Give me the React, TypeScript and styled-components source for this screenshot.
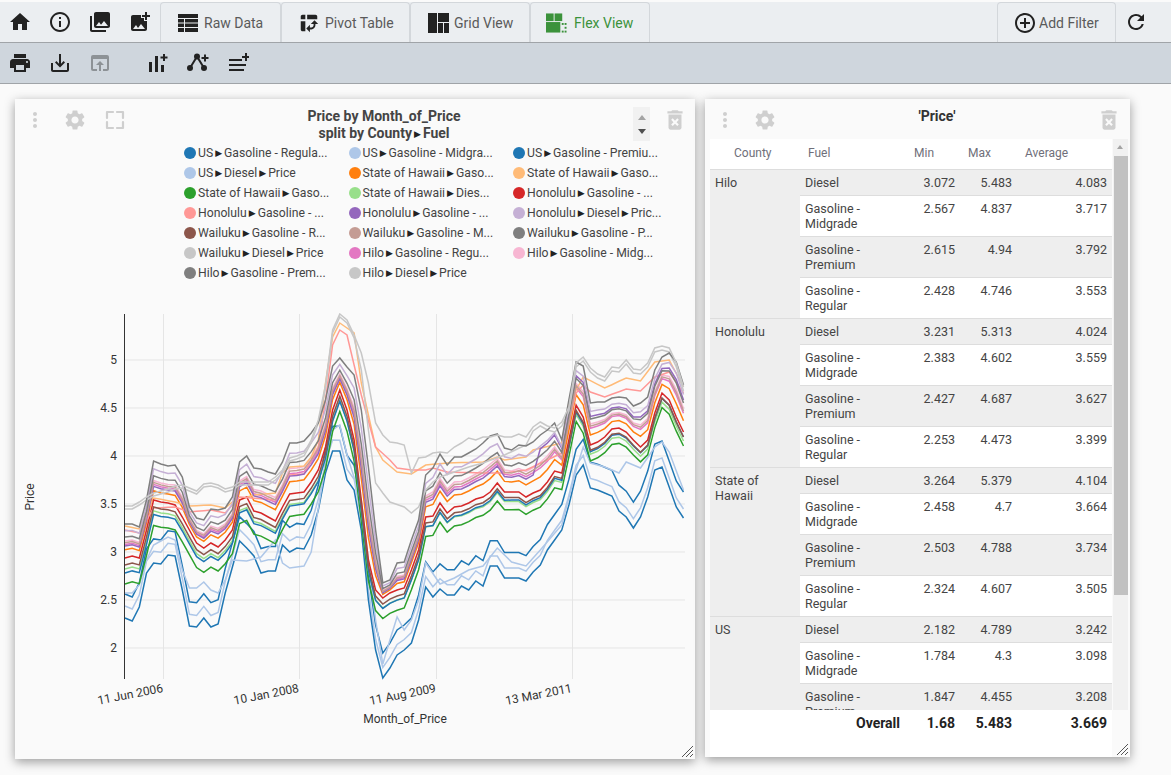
import * as React from 'react'
import styled, { createGlobalStyle } from 'styled-components'
import {
  MdHome,
  MdInfoOutline,
  MdPhotoLibrary,
  MdAddPhotoAlternate,
  MdPivotTableChart,
  MdAddCircleOutline,
  MdRefresh,
  MdPrint,
  MdSaveAlt,
  MdOpenInBrowser,
  MdMoreVert,
  MdSettings,
  MdDeleteForever,
} from 'react-icons/md'

const GlobalStyle = createGlobalStyle`
  html, body {
    margin: 0;
    height: 100%;
    overflow: hidden;
    background: #fafafa;
    font-family: Roboto, "Liberation Sans", Arial, sans-serif;
    color: #333;
  }
`

const TopBar = styled.div`
  display: flex;
  align-items: stretch;
  height: 40px;
  margin-top: 2px;
  padding-right: 15px;
  background: #ebeef1;
  border-bottom: 1px solid #a0a4a8;
`

const SubBar = styled.div`
  display: flex;
  align-items: stretch;
  height: 40px;
  background: #cfd6dd;
  border-bottom: 1px solid #a0a4a8;
`

const ToolIcon = styled.div<{ $muted?: boolean; $gapLeft?: number }>`
  display: flex;
  align-items: center;
  justify-content: center;
  width: 40px;
  margin-left: ${(p) => p.$gapLeft || 0}px;
  color: ${(p) => (p.$muted ? '#8d9296' : '#222')};
  font-size: 24px;
`

const ViewButton = styled.div<{ $active?: boolean; $width: number; $pad?: number; $gap?: number }>`
  display: flex;
  align-items: center;
  gap: ${(p) => (p.$gap === undefined ? 6 : p.$gap)}px;
  box-sizing: border-box;
  width: ${(p) => p.$width}px;
  padding-left: ${(p) => (p.$pad === undefined ? 17 : p.$pad)}px;
  border: 1px solid #d3d7db;
  border-bottom: none;
  border-radius: 4px 4px 0 0;
  color: ${(p) => (p.$active ? '#3b923b' : '#5a5a5a')};
  font-size: 14px;
`

const Spacer = styled.div`
  flex: 1;
`

const Workspace = styled.div`
  display: flex;
  align-items: flex-start;
  gap: 10px;
  padding: 15px 0 0 15px;
`

const Panel = styled.div<{ $width: number; $height: number }>`
  position: relative;
  width: ${(p) => p.$width}px;
  height: ${(p) => p.$height}px;
  background: #fafafa;
  box-shadow: 0 3px 10px rgba(0, 0, 0, 0.38);
`

const PanelHeader = styled.div<{ $height: number }>`
  display: flex;
  align-items: flex-start;
  height: ${(p) => p.$height}px;
`

const PanelIcon = styled.div<{ $gapRight?: number; $gapLeft?: number; $size?: number }>`
  display: flex;
  align-items: center;
  justify-content: center;
  flex: none;
  width: 40px;
  height: 42px;
  margin-left: ${(p) => p.$gapLeft || 0}px;
  margin-right: ${(p) => p.$gapRight || 0}px;
  color: #cfcfcf;
  font-size: ${(p) => p.$size || 24}px;
`

const ChartTitle = styled.div`
  flex: 1;
  padding-top: 9px;
  text-align: center;
  font-size: 14px;
  font-weight: 700;
  line-height: 16.5px;
  color: #444;
`

const TableTitle = styled.div`
  flex: 1;
  padding-top: 9px;
  text-align: center;
  font-size: 14px;
  font-weight: 700;
  line-height: 16px;
  color: #333;
`

const Arrow = styled.span`
  margin: 0 2px;
  font-family: "DejaVu Sans", sans-serif;
  font-size: 9px;
  font-weight: 400;
  color: #222;
  vertical-align: 1px;
`

const Spinner = styled.div`
  display: flex;
  flex: none;
  flex-direction: column;
  align-items: center;
  justify-content: space-around;
  width: 17px;
  height: 34px;
  margin-top: 8px;
  padding: 3px 0;
  box-sizing: border-box;
  background: #f1f1f1;
`

const SpinUp = styled.div`
  border-left: 4px solid transparent;
  border-right: 4px solid transparent;
  border-bottom: 5px solid #a3a3a3;
`

const SpinDown = styled.div`
  border-left: 4px solid transparent;
  border-right: 4px solid transparent;
  border-top: 5px solid #505050;
`

const Legend = styled.div`
  display: grid;
  grid-template-columns: repeat(3, 164.5px);
  grid-auto-rows: 20px;
  height: 141px;
  padding-left: 169px;
`

const LegendItem = styled.div`
  display: flex;
  align-items: center;
  gap: 2px;
  font-size: 12.2px;
  white-space: nowrap;
  color: #444;
`

const Swatch = styled.span<{ $color: string }>`
  flex: none;
  width: 12px;
  height: 12px;
  border-radius: 50%;
  background: ${(p) => p.$color};
`

const ChartSvg = styled.svg`
  display: block;
`

const TickLabel = styled.text`
  font-size: 12px;
  fill: #333;
`

const AxisLabel = styled.text`
  font-size: 12px;
  fill: #333;
`

const Resize = styled.svg`
  position: absolute;
  right: 2px;
  bottom: 2px;
`

const TableWrap = styled.div`
  display: flex;
  height: 571px;
  padding-left: 5px;
`

const TableClip = styled.div`
  width: 402px;
  height: 571px;
  overflow: hidden;
  background: #fff;
`

const DataTable = styled.table`
  width: 402px;
  table-layout: fixed;
  border-collapse: collapse;
  font-size: 12.5px;
  line-height: 15px;
  color: #444;
`

const HeadRow = styled.tr`
  height: 30px;
  border-bottom: 1px solid #ddd;
`

const HeadCell = styled.th<{ $indent: number }>`
  padding: 0 0 0 ${(p) => p.$indent}px;
  text-align: left;
  font-weight: 400;
  font-size: 12px;
  color: #6f6f7a;
`

const GroupCell = styled.td`
  padding: 5px;
  vertical-align: top;
  background: #eee;
  border-bottom: 1px solid #ddd;
`

const Row = styled.tr<{ $shaded: boolean }>`
  background: ${(p) => (p.$shaded ? '#eee' : '#fff')};
  border-bottom: 1px solid #ddd;
`

const Cell = styled.td<{ $num?: boolean }>`
  padding: 5px;
  vertical-align: top;
  text-align: ${(p) => (p.$num ? 'right' : 'left')};
`

const Track = styled.div`
  position: relative;
  flex: none;
  width: 15px;
  margin-left: 1px;
  background: #f1f1f1;
`

const TrackArrow = styled.div`
  position: absolute;
  top: 6px;
  left: 4px;
  border-left: 3.5px solid transparent;
  border-right: 3.5px solid transparent;
  border-bottom: 4px solid #a3a3a3;
`

const Thumb = styled.div`
  position: absolute;
  top: 17px;
  left: 1px;
  right: 0;
  height: 439px;
  background: #c1c1c1;
`

const TotalRow = styled.div`
  display: grid;
  grid-template-columns: 200px 50px 57px 95px;
  width: 402px;
  height: 47px;
  margin-left: 5px;
  background: #fff;
  font-size: 14px;
  font-weight: 700;
  line-height: 26px;
  color: #222;
`

const TotalCell = styled.div`
  padding-right: 5px;
  text-align: right;
`

const TotalName = styled(TotalCell)`
  padding-right: 10px;
`

const RawIcon = () => (
  <svg width="20" height="18" viewBox="0 0 20 18" fill="#222">
    <rect x="0" y="0" width="20" height="4" />
    <rect x="0" y="5" width="6" height="3.5" />
    <rect x="7" y="5" width="13" height="3.5" />
    <rect x="0" y="9.5" width="6" height="3.5" />
    <rect x="7" y="9.5" width="13" height="3.5" />
    <rect x="0" y="14" width="6" height="4" />
    <rect x="7" y="14" width="13" height="4" />
  </svg>
)

const GridIcon = () => (
  <svg width="21" height="20" viewBox="0 0 21 20" fill="#222">
    <rect x="0" y="0" width="9" height="20" />
    <rect x="10" y="0" width="11" height="9" />
    <rect x="10" y="10" width="5" height="10" />
    <rect x="16" y="10" width="5" height="10" />
  </svg>
)

const FlexIcon = () => (
  <svg width="21" height="20" viewBox="0 0 22 20" fill="#3b923b">
    <rect x="0" y="0" width="8" height="8" />
    <rect x="9" y="0" width="8" height="8" />
    <rect x="0" y="9" width="15" height="11" />
    <rect x="16.5" y="10" width="2" height="2" />
    <rect x="19.5" y="10" width="2" height="2" />
    <rect x="19.5" y="14" width="2" height="2" />
    <rect x="16.5" y="18" width="2" height="2" />
    <rect x="19.5" y="18" width="2" height="2" />
  </svg>
)

const BarsAddIcon = () => (
  <svg width="20" height="18" viewBox="0 0 20 18" fill="#222">
    <rect x="1" y="8" width="3" height="10" />
    <rect x="7" y="2" width="3" height="16" />
    <rect x="13" y="11" width="3" height="7" />
    <path d="M12.5 2.5H15V0h2v2.5h2.5v2H17V7h-2V4.5h-2.5z" />
  </svg>
)

const NodesAddIcon = () => (
  <svg width="24" height="20" viewBox="0 0 24 20" fill="#222">
    <path d="M11 3.5 4 15M11 3.5 18 15" stroke="#222" strokeWidth="2" fill="none" />
    <circle cx="4" cy="15" r="3" />
    <circle cx="11" cy="3.5" r="3" />
    <circle cx="18" cy="15" r="3" />
    <path d="M15.5 4H18V1.500h2V4h2.500v2H20v2.500h-2V6h-2.500z" />
  </svg>
)

const ListAddIcon = () => (
  <svg width="22" height="20" viewBox="0 0 22 20" fill="#222">
    <rect x="2" y="6" width="13" height="2" />
    <rect x="2" y="11" width="17" height="2" />
    <rect x="2" y="16" width="15" height="2" />
    <path d="M15 3H18V0h2v3h2v2h-2v3h-2V5h-3z" />
  </svg>
)

const FullscreenIcon = () => (
  <svg width="20" height="20" viewBox="0 0 20 20" fill="none" stroke="currentColor" strokeWidth="2.2" strokeLinecap="round" strokeLinejoin="round">
    <path d="M2 8V2h6M12 2h6v6M18 12v6h-6M8 18H2v-6" />
  </svg>
)

const ResizeHandle = () => (
  <Resize width="12" height="12" viewBox="0 0 12 12" stroke="#555" strokeWidth="1">
    <path d="M1 12 12 1M5 12l7-7M9 12l3-3" />
  </Resize>
)

const lineA = [558, 556, 558, 530, 500, 502, 503, 505, 517, 530, 543, 548, 543, 547, 540, 530, 500, 497, 511, 513, 517, 521, 507, 494, 493, 492, 482, 470, 447, 410, 390, 410, 440, 500, 560, 590, 598, 593, 590, 588, 570, 550, 517, 516, 503, 513, 507, 506, 503, 499, 497, 492, 483, 492, 492, 492, 497, 493, 490, 482, 471, 473, 440, 405, 417, 445, 442, 437, 429, 428, 432, 440, 447, 440, 413, 393, 400, 417, 432]
const lineB = [618, 621, 607, 573, 563, 564, 555, 556, 590, 626, 627, 618, 627, 624, 593, 567, 541, 548, 556, 573, 571, 571, 545, 552, 548, 549, 535, 510, 473, 451, 451, 480, 490, 530, 600, 650, 678, 668, 655, 650, 643, 620, 587, 597, 589, 595, 595, 586, 590, 581, 586, 566, 566, 578, 578, 578, 581, 572, 565, 550, 540, 530, 505, 475, 465, 488, 490, 493, 496, 511, 517, 528, 517, 497, 470, 467, 487, 507, 518]
const lineC = [506, 506, 502, 497, 493, 491, 489, 486, 485, 488, 491, 484, 483, 485, 489, 487, 482, 482, 482, 482, 482, 477, 470, 458, 456, 453, 440, 420, 385, 330, 314, 320, 335, 353, 383, 423, 435, 442, 443, 445, 473, 458, 457, 453, 452, 453, 447, 443, 438, 440, 437, 437, 435, 437, 437, 434, 437, 427, 422, 426, 428, 422, 407, 363, 357, 368, 374, 377, 367, 368, 360, 369, 370, 363, 348, 346, 348, 363, 387]
const lineE = [524, 524, 527, 500, 461, 464, 466, 465, 477, 507, 518, 520, 509, 510, 508, 497, 462, 456, 468, 469, 472, 474, 462, 443, 443, 441, 433, 423, 400, 366, 358, 367, 375, 410, 467, 530, 583, 580, 563, 562, 540, 520, 475, 468, 454, 465, 457, 457, 453, 449, 443, 436, 434, 448, 450, 445, 446, 442, 435, 430, 423, 440, 400, 362, 366, 403, 402, 402, 398, 397, 398, 406, 403, 397, 370, 357, 353, 362, 385]

type Key = [number, number]

const fromKeys = (keys: Key[]) =>
  lineA.map((_, i) => {
    const next = keys.findIndex((k) => k[0] >= i)
    if (next <= 0) return keys[0][1]
    const [x0, y0] = keys[next - 1]
    const [x1, y1] = keys[next]
    return y0 + ((y1 - y0) * (i - x0)) / (x1 - x0)
  })

const blend = (p: number[], q: number[], t: number) => p.map((v, i) => v + (q[i] - v) * t)
const shift = (p: number[], from: number, to: number) => p.map((v, i) => v + from + ((to - from) * i) / 78)

const usDiesel = fromKeys([[0, 593], [1, 593], [2, 585], [3, 560], [4, 545], [6, 537], [7, 540], [8, 570], [9, 588], [10, 588], [11, 582], [12, 590], [13, 593], [14, 580], [15, 560], [17, 561], [19, 557], [21, 540], [22, 563], [23, 568], [25, 566], [26, 552], [28, 465], [29, 430], [30, 425], [31, 455], [33, 500], [35, 620], [36, 664], [37, 640], [38, 617], [39, 630], [40, 620], [41, 600], [42, 563], [44, 584], [46, 578], [48, 570], [50, 566], [52, 548], [54, 562], [56, 566], [58, 550], [61, 525], [63, 470], [64, 447], [65, 463], [67, 467], [69, 473], [70, 462], [72, 468], [74, 447], [75, 442], [76, 452], [78, 490]])
const hawaiiDiesel = fromKeys([[0, 526], [2, 529], [3, 512], [4, 498], [7, 502], [9, 506], [12, 505], [14, 508], [15, 502], [18, 495], [21, 493], [22, 473], [23, 467], [25, 466], [26, 457], [27, 440], [28, 383], [29, 337], [30, 323], [32, 333], [33, 383], [35, 447], [36, 460], [38, 472], [40, 474], [42, 465], [45, 463], [50, 462], [52, 457], [53, 460], [56, 457], [57, 450], [61, 443], [62, 403], [64, 377], [67, 388], [70, 378], [72, 381], [74, 362], [76, 360], [78, 387]])
const honoluluPink = fromKeys([[0, 530], [2, 533], [3, 520], [4, 508], [7, 507], [9, 512], [12, 510], [14, 513], [16, 497], [21, 500], [23, 475], [25, 474], [27, 447], [28, 400], [29, 345], [30, 330], [31, 335], [33, 395], [35, 447], [37, 460], [38, 468], [40, 470], [42, 470], [43, 468], [45, 472], [50, 473], [53, 473], [56, 470], [59, 460], [61, 453], [63, 393], [64, 385], [65, 392], [67, 397], [70, 389], [72, 391], [74, 377], [76, 372], [78, 393]])
const dieselDip = fromKeys([[33, 370], [34, 430], [35, 483], [36, 493], [37, 502], [39, 507], [40, 513], [41, 507], [42, 490], [43, 482], [44, 477], [46, 472], [48, 467], [50, 463], [53, 455], [56, 445]])
const hiloDieselLow = lineC.map((v, i) => (i < 33 ? v + 3 : i < 57 ? dieselDip[i] : v + 4))
const purple = lineA.map((v, i) => v + (lineE[i] - v) * (i < 58 ? 0.35 : i < 63 ? 0.75 : 0.68))

const series: [string, number[]][] = [
  ['#e377c2', blend(lineA, lineE, 0.4)],
  ['#f7b6d2', blend(lineA, lineE, 0.5)],
  ['#1f77b4', shift(lineB, -24, -26)],
  ['#aec7e8', shift(lineB, -12, -9)],
  ['#1f77b4', lineB],
  ['#aec7e8', usDiesel],
  ['#ff7f0e', blend(lineA, lineE, 0.24)],
  ['#ffbb78', hawaiiDiesel],
  ['#2ca02c', shift(lineA, 26, 14)],
  ['#98df8a', shift(lineA, 11, 9)],
  ['#1f77b4', shift(lineA, 15, 5)],
  ['#d62728', lineA],
  ['#ff9896', honoluluPink],
  ['#9467bd', purple],
  ['#c5b0d5', blend(lineA, lineE, 0.8)],
  ['#8c564b', shift(lineA, 7, 5)],
  ['#c49c94', blend(lineA, lineE, 0.45)],
  ['#7f7f7f', blend(lineA, lineE, 0.62)],
  ['#c7c7c7', hiloDieselLow],
  ['#7f7f7f', lineE],
  ['#c7c7c7', lineC],
]

const legend: [string, string, string, string?][] = [
  ['#1f77b4', 'US', 'Gasoline - Regula...'],
  ['#aec7e8', 'US', 'Gasoline - Midgra...'],
  ['#1f77b4', 'US', 'Gasoline - Premiu...'],
  ['#aec7e8', 'US', 'Diesel', 'Price'],
  ['#ff7f0e', 'State of Hawaii', 'Gaso...'],
  ['#ffbb78', 'State of Hawaii', 'Gaso...'],
  ['#2ca02c', 'State of Hawaii', 'Gaso...'],
  ['#98df8a', 'State of Hawaii', 'Dies...'],
  ['#d62728', 'Honolulu', 'Gasoline - ...'],
  ['#ff9896', 'Honolulu', 'Gasoline - ...'],
  ['#9467bd', 'Honolulu', 'Gasoline - ...'],
  ['#c5b0d5', 'Honolulu', 'Diesel', 'Pric...'],
  ['#8c564b', 'Wailuku', 'Gasoline - R...'],
  ['#c49c94', 'Wailuku', 'Gasoline - M...'],
  ['#7f7f7f', 'Wailuku', 'Gasoline - P...'],
  ['#c7c7c7', 'Wailuku', 'Diesel', 'Price'],
  ['#e377c2', 'Hilo', 'Gasoline - Regu...'],
  ['#f7b6d2', 'Hilo', 'Gasoline - Midg...'],
  ['#7f7f7f', 'Hilo', 'Gasoline - Prem...'],
  ['#c7c7c7', 'Hilo', 'Diesel', 'Price'],
]

const yTicks: [string, number][] = [['5', 360], ['4.5', 408], ['4', 456], ['3.5', 504], ['3', 552], ['2.5', 600], ['2', 648]]
const xTicks: [string, number][] = [['11 Jun 2006', 163.5], ['10 Jan 2008', 299.5], ['11 Aug 2009', 436.5], ['13 Mar 2011', 572.5]]

const Chart = () => (
  <ChartSvg width="680" height="475" viewBox="15 284 680 475">
    <defs>
      <clipPath id="plot">
        <rect x="124" y="313" width="561" height="367" />
      </clipPath>
    </defs>
    {yTicks.map(([label, y]) => (
      <g key={label}>
        <line x1="124" x2="685" y1={y} y2={y} stroke="#e5e5e5" />
        <TickLabel x="117" y={y + 4} textAnchor="end">{label}</TickLabel>
      </g>
    ))}
    {xTicks.map(([label, x]) => (
      <g key={label}>
        <line x1={x} x2={x} y1="314" y2="679" stroke="#e5e5e5" />
        <TickLabel transform={`translate(${x} 692) rotate(-11)`} textAnchor="end">{label}</TickLabel>
      </g>
    ))}
    <g clipPath="url(#plot)" fill="none" strokeWidth="1.5">
      {series.map(([color, ys], n) => (
        <polyline key={n} stroke={color} points={ys.map((y, i) => `${(125 + 7.16 * i).toFixed(1)},${y.toFixed(1)}`).join(' ')} />
      ))}
    </g>
    <line x1="124.5" x2="124.5" y1="314" y2="679" stroke="#333" />
    <AxisLabel x="405" y="723" textAnchor="middle">Month_of_Price</AxisLabel>
    <AxisLabel transform="translate(34 497) rotate(-90)" textAnchor="middle">Price</AxisLabel>
  </ChartSvg>
)

const groups: { county: string; rows: [string, string, string, string][] }[] = [
  {
    county: 'Hilo',
    rows: [
      ['Diesel', '3.072', '5.483', '4.083'],
      ['Gasoline - Midgrade', '2.567', '4.837', '3.717'],
      ['Gasoline - Premium', '2.615', '4.94', '3.792'],
      ['Gasoline - Regular', '2.428', '4.746', '3.553'],
    ],
  },
  {
    county: 'Honolulu',
    rows: [
      ['Diesel', '3.231', '5.313', '4.024'],
      ['Gasoline - Midgrade', '2.383', '4.602', '3.559'],
      ['Gasoline - Premium', '2.427', '4.687', '3.627'],
      ['Gasoline - Regular', '2.253', '4.473', '3.399'],
    ],
  },
  {
    county: 'State of Hawaii',
    rows: [
      ['Diesel', '3.264', '5.379', '4.104'],
      ['Gasoline - Midgrade', '2.458', '4.7', '3.664'],
      ['Gasoline - Premium', '2.503', '4.788', '3.734'],
      ['Gasoline - Regular', '2.324', '4.607', '3.505'],
    ],
  },
  {
    county: 'US',
    rows: [
      ['Diesel', '2.182', '4.789', '3.242'],
      ['Gasoline - Midgrade', '1.784', '4.3', '3.098'],
      ['Gasoline - Premium', '1.847', '4.455', '3.208'],
    ],
  },
]

export default function App() {
  return (
    <>
      <GlobalStyle />
      <TopBar>
        <ToolIcon><MdHome /></ToolIcon>
        <ToolIcon><MdInfoOutline /></ToolIcon>
        <ToolIcon><MdPhotoLibrary /></ToolIcon>
        <ToolIcon><MdAddPhotoAlternate /></ToolIcon>
        <ViewButton $width={121}><RawIcon />Raw Data</ViewButton>
        <ViewButton $width={129} $pad={16} $gap={5}><MdPivotTableChart size={22} color="#222" />Pivot Table</ViewButton>
        <ViewButton $width={120} $pad={17} $gap={5}><GridIcon />Grid View</ViewButton>
        <ViewButton $width={120} $pad={15} $gap={7} $active><FlexIcon />Flex View</ViewButton>
        <Spacer />
        <ViewButton $width={119} $pad={15} $gap={2}><MdAddCircleOutline size={24} color="#222" />Add Filter</ViewButton>
        <ToolIcon><MdRefresh /></ToolIcon>
      </TopBar>
      <SubBar>
        <ToolIcon><MdPrint /></ToolIcon>
        <ToolIcon><MdSaveAlt /></ToolIcon>
        <ToolIcon $muted><MdOpenInBrowser /></ToolIcon>
        <ToolIcon $gapLeft={18}><BarsAddIcon /></ToolIcon>
        <ToolIcon><NodesAddIcon /></ToolIcon>
        <ToolIcon><ListAddIcon /></ToolIcon>
      </SubBar>
      <Workspace>
        <Panel $width={680} $height={660}>
          <PanelHeader $height={44}>
            <PanelIcon><MdMoreVert /></PanelIcon>
            <PanelIcon><MdSettings /></PanelIcon>
            <PanelIcon><FullscreenIcon /></PanelIcon>
            <ChartTitle>
              Price by Month_of_Price
              <br />
              split by County<Arrow>▶</Arrow>Fuel
            </ChartTitle>
            <Spinner><SpinUp /><SpinDown /></Spinner>
            <PanelIcon $gapLeft={5} $size={26}><MdDeleteForever /></PanelIcon>
          </PanelHeader>
          <Legend>
            {legend.map(([color, a, b, c], i) => (
              <LegendItem key={i}>
                <Swatch $color={color} />
                <span>
                  {a}<Arrow>▶</Arrow>{b}
                  {c && <><Arrow>▶</Arrow>{c}</>}
                </span>
              </LegendItem>
            ))}
          </Legend>
          <Chart />
          <ResizeHandle />
        </Panel>
        <Panel $width={425} $height={658}>
          <PanelHeader $height={40}>
            <PanelIcon><MdMoreVert /></PanelIcon>
            <PanelIcon><MdSettings /></PanelIcon>
            <TableTitle>'Price'</TableTitle>
            <PanelIcon $gapRight={1} $size={26}><MdDeleteForever /></PanelIcon>
          </PanelHeader>
          <TableWrap>
            <TableClip>
              <DataTable>
                <colgroup>
                  <col width="90" />
                  <col width="110" />
                  <col width="50" />
                  <col width="57" />
                  <col width="95" />
                </colgroup>
                <thead>
                  <HeadRow>
                    <HeadCell $indent={24}>County</HeadCell>
                    <HeadCell $indent={8}>Fuel</HeadCell>
                    <HeadCell $indent={4}>Min</HeadCell>
                    <HeadCell $indent={8}>Max</HeadCell>
                    <HeadCell $indent={8}>Average</HeadCell>
                  </HeadRow>
                </thead>
                <tbody>
                  {groups.map((group) =>
                    group.rows.map(([fuel, min, max, avg], i) => (
                      <Row key={group.county + fuel} $shaded={i % 2 === 0}>
                        {i === 0 && <GroupCell rowSpan={group.rows.length}>{group.county}</GroupCell>}
                        <Cell>{fuel}</Cell>
                        <Cell $num>{min}</Cell>
                        <Cell $num>{max}</Cell>
                        <Cell $num>{avg}</Cell>
                      </Row>
                    )),
                  )}
                </tbody>
              </DataTable>
            </TableClip>
            <Track>
              <TrackArrow />
              <Thumb />
            </Track>
          </TableWrap>
          <TotalRow>
            <TotalName>Overall</TotalName>
            <TotalCell>1.68</TotalCell>
            <TotalCell>5.483</TotalCell>
            <TotalCell>3.669</TotalCell>
          </TotalRow>
          <ResizeHandle />
        </Panel>
      </Workspace>
    </>
  )
}
